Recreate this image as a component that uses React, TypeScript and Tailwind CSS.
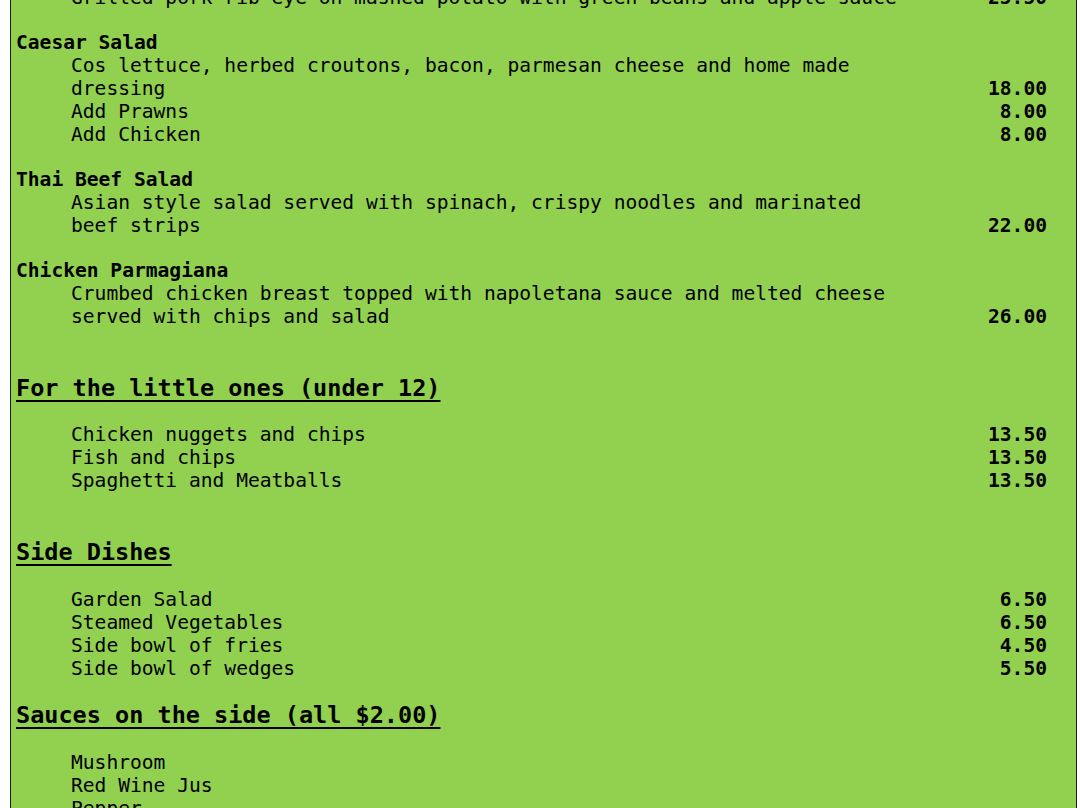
import React from 'react'

type Item = { desc: string; price?: string }
type Dish = { name?: string; items: Item[] }

const mains: Dish[] = [
  {
    items: [{ desc: 'Grilled pork rib eye on mashed potato with green beans and apple sauce', price: '25.50' }],
  },
  {
    name: 'Caesar Salad',
    items: [
      { desc: 'Cos lettuce, herbed croutons, bacon, parmesan cheese and home made dressing', price: '18.00' },
      { desc: 'Add Prawns', price: '8.00' },
      { desc: 'Add Chicken', price: '8.00' },
    ],
  },
  {
    name: 'Thai Beef Salad',
    items: [{ desc: 'Asian style salad served with spinach, crispy noodles and marinated beef strips', price: '22.00' }],
  },
  {
    name: 'Chicken Parmagiana',
    items: [
      { desc: 'Crumbed chicken breast topped with napoletana sauce and melted cheese served with chips and salad', price: '26.00' },
    ],
  },
]

const kids: Item[] = [
  { desc: 'Chicken nuggets and chips', price: '13.50' },
  { desc: 'Fish and chips', price: '13.50' },
  { desc: 'Spaghetti and Meatballs', price: '13.50' },
]

const sides: Item[] = [
  { desc: 'Garden Salad', price: '6.50' },
  { desc: 'Steamed Vegetables', price: '6.50' },
  { desc: 'Side bowl of fries', price: '4.50' },
  { desc: 'Side bowl of wedges', price: '5.50' },
]

const sauces: Item[] = [{ desc: 'Mushroom' }, { desc: 'Red Wine Jus' }, { desc: 'Pepper' }, { desc: 'Gravy' }]

const Row = ({ item }: { item: Item }) => (
  <div className="flex items-end">
    <div className="ml-[55px] w-[845px]">{item.desc}</div>
    <div className="flex-1 pr-[29px] text-right font-bold">{item.price}</div>
  </div>
)

const Heading = ({ children, className }: { children: React.ReactNode; className?: string }) => (
  <h2 className={`text-[23.5px] font-bold leading-[28px] underline decoration-2 underline-offset-[4px] ${className ?? ''}`}>
    {children}
  </h2>
)

export default function App() {
  return (
    <div className="h-[808px] overflow-hidden bg-white">
      <div className="ml-[10px] h-full w-[1067px] overflow-hidden border-x border-[#1c1c1c] bg-[#92d050] pl-[5px] font-['DejaVu_Sans_Mono',monospace] text-[19.6px] leading-[23px] text-black">
        <div className="-mt-[14px]">
          {/* Mains */}
          {mains.map((dish, i) => (
            <div key={i} className="mb-[22px]">
              {dish.name && <div className="font-bold">{dish.name}</div>}
              {dish.items.map((item) => (
                <Row key={item.desc} item={item} />
              ))}
            </div>
          ))}

          {/* Kids */}
          <Heading className="mt-[46px] mb-[21px]">For the little ones (under 12)</Heading>
          {kids.map((item) => (
            <Row key={item.desc} item={item} />
          ))}

          {/* Sides */}
          <Heading className="mt-[46px] mb-[22px]">Side Dishes</Heading>
          {sides.map((item) => (
            <Row key={item.desc} item={item} />
          ))}

          {/* Sauces */}
          <Heading className="mt-[21px] mb-[22px]">Sauces on the side (all $2.00)</Heading>
          {sauces.map((item) => (
            <Row key={item.desc} item={item} />
          ))}
        </div>
      </div>
    </div>
  )
}
